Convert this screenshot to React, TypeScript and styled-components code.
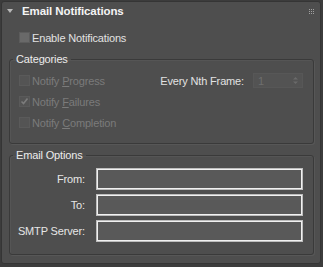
import React from "react";
import styled, { createGlobalStyle } from "styled-components";

const Global = createGlobalStyle`
  html, body {
    margin: 0;
    padding: 0;
    background: #3c3c3c;
    width: 323px;
    height: 267px;
    overflow: hidden;
  }
  * { box-sizing: border-box; }
`;

const Panel = styled.div`
  margin: 1px 0 0 1px;
  width: 320px;
  height: 263px;
  border: 1px solid #353535;
  border-radius: 3px;
  background: #4e4e4e;
  font-family: "Liberation Sans", Arial, sans-serif;
  font-size: 11px;
  letter-spacing: -0.15px;
  color: #e2e2e2;
  display: flex;
  flex-direction: column;
`;

const Header = styled.div`
  height: 18px;
  display: flex;
  align-items: center;
  padding: 0 6px 0 5px;
`;

const Caret = styled.span`
  width: 0;
  height: 0;
  border-left: 3px solid transparent;
  border-right: 3px solid transparent;
  border-top: 4px solid #b8b8b8;
  margin-right: 9px;
`;

const Title = styled.span`
  font-weight: bold;
  font-size: 11.5px;
  letter-spacing: -0.1px;
  color: #f4f4f4;
`;

const Grip = styled.span`
  margin-left: auto;
  display: grid;
  grid-template-columns: repeat(3, 1px);
  grid-template-rows: repeat(3, 1px);
  gap: 1px;
  & > i {
    background: #a0a0a0;
  }
`;

const Row = styled.div<{ $indent?: number }>`
  height: 21px;
  display: flex;
  align-items: center;
  padding-left: ${(p) => p.$indent ?? 0}px;
`;

const Body = styled.div`
  padding-top: 7px;
  display: flex;
  flex-direction: column;
`;

const Box = styled.span<{ $disabled?: boolean }>`
  width: 11px;
  height: 11px;
  flex: none;
  display: inline-flex;
  align-items: center;
  justify-content: center;
  border: 1px solid ${(p) => (p.$disabled ? "#5a5a5a" : "#5c5c5c")};
  background: ${(p) => (p.$disabled ? "#545454" : "#696969")};
  margin-right: 2px;
`;

const Label = styled.span<{ $disabled?: boolean }>`
  color: ${(p) => (p.$disabled ? "#7b7b7b" : "#e2e2e2")};
  white-space: nowrap;
  & u {
    text-decoration-thickness: 1px;
    text-underline-offset: 1px;
  }
`;

const Group = styled.fieldset<{ $top: number; $pt: number; $pb: number }>`
  margin: ${(p) => p.$top}px 6px 0 7px;
  border: 1px solid #3a3a3a;
  border-radius: 3px;
  box-shadow: 1px 1px 0 #575757, inset 1px 1px 0 #555555;
  padding: ${(p) => p.$pt}px 10px ${(p) => p.$pb}px 9px;
  min-width: 0;
`;

const Legend = styled.legend`
  margin-left: -6px;
  padding: 0 3px;
  line-height: 13px;
  color: #ececec;
  font-size: 11px;
`;

const SpinRight = styled.div`
  margin-left: auto;
  display: flex;
  align-items: center;
  gap: 9px;
`;

const Spinner = styled.div`
  width: 50px;
  height: 15px;
  border: 1px solid #575757;
  background: #535353;
  display: flex;
  align-items: center;
  justify-content: space-between;
  padding: 0 4px 0 4px;
  color: #6e6e6e;
`;

const Arrows = styled.svg`
  width: 5px;
  height: 9px;
`;

const Form = styled.div`
  display: grid;
  grid-template-columns: 67px 1fr;
  column-gap: 10px;
  row-gap: 4px;
  align-items: center;
`;

const FieldLabel = styled.span`
  justify-self: end;
  white-space: nowrap;
  color: #e6e6e6;
  padding-right: 1px;
`;

const Input = styled.div`
  height: 22px;
  border: 1px solid #bdbdbd;
  box-shadow: inset 0 0 0 1px #f0f0f0;
  background: #595959;
`;

function Check({ label, u, rest, checked, disabled }: { label: string; u: string; rest: string; checked?: boolean; disabled?: boolean }) {
  return (
    <>
      <Box $disabled={disabled}>
        {checked && (
          <svg width="9" height="9" viewBox="0 0 9 9">
            <polyline points="1.5,4.5 3.5,6.5 7.5,1.5" fill="none" stroke="#7c7c7c" strokeWidth="1.6" />
          </svg>
        )}
      </Box>
      <Label $disabled={disabled}>
        {label}
        <u>{u}</u>
        {rest}
      </Label>
    </>
  );
}

export default function App() {
  return (
    <>
      <Global />
      <Panel>
        <Header>
          <Caret />
          <Title>Email Notifications</Title>
          <Grip>
            {Array.from({ length: 9 }).map((_, i) => (
              <i key={i} />
            ))}
          </Grip>
        </Header>
        <Body>
          <Row $indent={17}>
            <Box />
            <Label>Enable Notifications</Label>
          </Row>
          <Group $top={5} $pt={4} $pb={10}>
            <Legend>Categories</Legend>
            <Row $indent={0}>
              <Check label="Notify " u="P" rest="rogress" disabled />
              <SpinRight>
                <Label>Every Nth Frame:</Label>
                <Spinner>
                  <span>1</span>
                  <Arrows viewBox="0 0 5 9">
                    <polygon points="0,3.5 2.5,1 5,3.5" fill="#6a6a6a" />
                    <polygon points="0,5.5 2.5,8 5,5.5" fill="#6a6a6a" />
                  </Arrows>
                </Spinner>
              </SpinRight>
            </Row>
            <Row>
              <Check label="Notify " u="F" rest="ailures" checked disabled />
            </Row>
            <Row>
              <Check label="Notify " u="C" rest="ompletion" disabled />
            </Row>
          </Group>
          <Group $top={5} $pt={6} $pb={12}>
            <Legend>Email Options</Legend>
            <Form>
              <FieldLabel>From:</FieldLabel>
              <Input />
              <FieldLabel>To:</FieldLabel>
              <Input />
              <FieldLabel>SMTP Server:</FieldLabel>
              <Input />
            </Form>
          </Group>
        </Body>
      </Panel>
    </>
  );
}
